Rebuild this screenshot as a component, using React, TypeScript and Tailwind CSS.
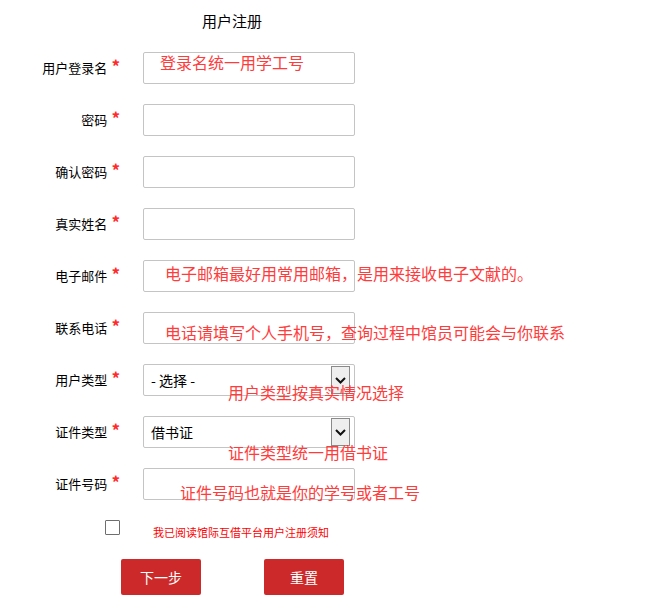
import type { ReactNode } from "react";

const font = { fontFamily: '"Microsoft YaHei", "Noto Sans CJK SC", sans-serif' };

function Row({ label, children, hint }: { label: string; children: ReactNode; hint?: ReactNode }) {
  return (
    <div className="relative flex h-8 items-center mb-5">
      <div className="w-[120px] flex justify-end items-center text-[13px] text-[#000]">
        <span>{label}</span>
        <span className="ml-[4px] text-[17px] font-bold leading-none text-[#ff2a2a] relative -top-[3px]">*</span>
      </div>
      <div className="ml-[23px]">{children}</div>
      {hint}
    </div>
  );
}

function TextInput() {
  return <div className="w-[212px] h-8 border border-[#c4c4c4] rounded-[2px] bg-white" />;
}

function Select({ value }: { value: string }) {
  return (
    <div className="w-[212px] h-8 border border-[#c4c4c4] rounded-[2px] bg-white flex items-center justify-between pl-[7px] pr-[4px]">
      <span className="text-[14px] text-[#000]">{value}</span>
      <div className="w-[19px] h-[28px] bg-[#efefef] border border-[#8a8a8a] flex items-center justify-center">
        <svg width="11" height="7" viewBox="0 0 11 7">
          <path d="M1 1l4.5 4.5L10 1" fill="none" stroke="#111" strokeWidth="2" />
        </svg>
      </div>
    </div>
  );
}

function Hint({ text, className }: { text: string; className: string }) {
  return (
    <span className={`absolute whitespace-nowrap text-[16px] leading-5 text-[#ff3b3b] ${className}`}>{text}</span>
  );
}

export default function App() {
  return (
    <div className="w-[663px] h-[597px] bg-white overflow-hidden" style={font}>
      <div className="w-[464px] text-center text-[15px] text-[#000] pt-[10px] h-[52px]">用户注册</div>

      <Row label="用户登录名" hint={<Hint text="登录名统一用学工号" className="left-[160px] top-0" />}>
        <TextInput />
      </Row>
      <Row label="密码">
        <TextInput />
      </Row>
      <Row label="确认密码">
        <TextInput />
      </Row>
      <Row label="真实姓名">
        <TextInput />
      </Row>
      <Row label="电子邮件" hint={<Hint text="电子邮箱最好用常用邮箱，是用来接收电子文献的。" className="left-[165px] top-[3px]" />}>
        <TextInput />
      </Row>
      <Row label="联系电话" hint={<Hint text="电话请填写个人手机号，查询过程中馆员可能会与你联系" className="left-[165px] top-[10px]" />}>
        <TextInput />
      </Row>
      <Row label="用户类型" hint={<Hint text="用户类型按真实情况选择" className="left-[228px] top-[18px]" />}>
        <Select value="- 选择 -" />
      </Row>
      <Row label="证件类型" hint={<Hint text="证件类型统一用借书证" className="left-[228px] top-[26px]" />}>
        <Select value="借书证" />
      </Row>
      <Row label="证件号码" hint={<Hint text="证件号码也就是你的学号或者工号" className="left-[180px] top-[14px]" />}>
        <TextInput />
      </Row>

      <div className="flex items-center h-[15px]">
        <div className="ml-[105px] w-[15px] h-[15px] border border-[#6e6e6e] rounded-[1px] bg-white" />
        <span className="ml-[33px] mt-[10px] text-[11px] text-[#ff0000]">我已阅读馆际互借平台用户注册须知</span>
      </div>

      <div className="flex mt-[24px] pl-[121px] gap-[63px]">
        <button className="w-[80px] h-[36px] rounded-[2px] bg-[#cc2a2a] text-white text-[14px]">下一步</button>
        <button className="w-[80px] h-[36px] rounded-[2px] bg-[#cc2a2a] text-white text-[14px]">重置</button>
      </div>
    </div>
  );
}
